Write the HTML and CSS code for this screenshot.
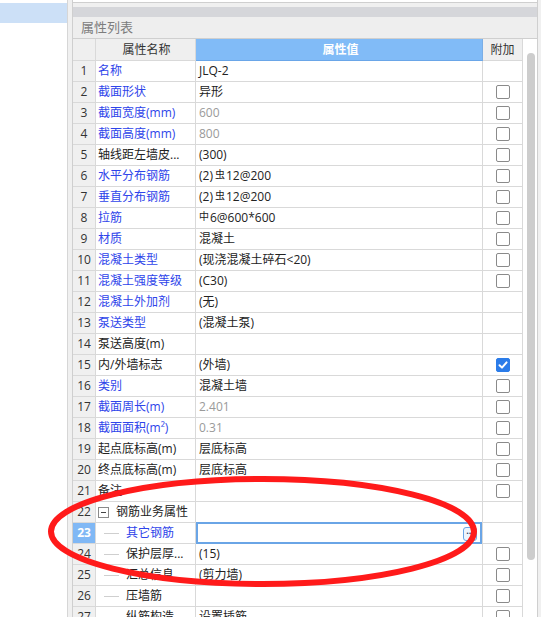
FILE: index.html
```html
<!DOCTYPE html>
<html lang="zh-CN">
<head>
<meta charset="utf-8">
<title>属性列表</title>
<link rel="stylesheet" href="styles.css">
</head>
<body>
<div class="app">
  <div class="left"><div class="sel"></div></div>
  <div class="main">
    <div class="panel">
      <div class="topbox"></div>
      <div class="gap"></div>
      <div class="bar"></div>
      <div class="title">属性列表</div>
      <div class="gridwrap">
        <div class="table">
          <div class="row head">
            <div class="num"></div>
            <div class="name">属性名称</div>
            <div class="val">属性值</div>
            <div class="add">附加</div>
          </div>
          <div class="row"><div class="num">1</div><div class="name blue">名称</div><div class="val">JLQ-2</div><div class="add"></div></div>
          <div class="row"><div class="num">2</div><div class="name blue">截面形状</div><div class="val">异形</div><div class="add"><span class="cb"></span></div></div>
          <div class="row"><div class="num">3</div><div class="name blue">截面宽度(mm)</div><div class="val gray">600</div><div class="add"><span class="cb"></span></div></div>
          <div class="row"><div class="num">4</div><div class="name blue">截面高度(mm)</div><div class="val gray">800</div><div class="add"><span class="cb"></span></div></div>
          <div class="row"><div class="num">5</div><div class="name">轴线距左墙皮...</div><div class="val">(300)</div><div class="add"><span class="cb"></span></div></div>
          <div class="row"><div class="num">6</div><div class="name blue">水平分布钢筋</div><div class="val">(2)<span class="sym">虫</span>12@200</div><div class="add"><span class="cb"></span></div></div>
          <div class="row"><div class="num">7</div><div class="name blue">垂直分布钢筋</div><div class="val">(2)<span class="sym">虫</span>12@200</div><div class="add"><span class="cb"></span></div></div>
          <div class="row"><div class="num">8</div><div class="name blue">拉筋</div><div class="val"><span class="sym first">中</span>6@600*600</div><div class="add"><span class="cb"></span></div></div>
          <div class="row"><div class="num">9</div><div class="name blue">材质</div><div class="val">混凝土</div><div class="add"><span class="cb"></span></div></div>
          <div class="row"><div class="num">10</div><div class="name blue">混凝土类型</div><div class="val">(现浇混凝土碎石&lt;20)</div><div class="add"><span class="cb"></span></div></div>
          <div class="row"><div class="num">11</div><div class="name blue">混凝土强度等级</div><div class="val">(C30)</div><div class="add"><span class="cb"></span></div></div>
          <div class="row"><div class="num">12</div><div class="name blue">混凝土外加剂</div><div class="val">(无)</div><div class="add"></div></div>
          <div class="row"><div class="num">13</div><div class="name blue">泵送类型</div><div class="val">(混凝土泵)</div><div class="add"></div></div>
          <div class="row"><div class="num">14</div><div class="name">泵送高度(m)</div><div class="val"></div><div class="add"></div></div>
          <div class="row"><div class="num">15</div><div class="name">内/外墙标志</div><div class="val">(外墙)</div><div class="add"><span class="cb on"><svg viewBox="0 0 14 14" width="14" height="14"><path d="M3.5 7.2 L6 9.6 L10.6 4.4" fill="none" stroke="#fff" stroke-width="2" stroke-linecap="round" stroke-linejoin="round"/></svg></span></div></div>
          <div class="row"><div class="num">16</div><div class="name blue">类别</div><div class="val">混凝土墙</div><div class="add"><span class="cb"></span></div></div>
          <div class="row"><div class="num">17</div><div class="name blue">截面周长(m)</div><div class="val gray">2.401</div><div class="add"><span class="cb"></span></div></div>
          <div class="row"><div class="num">18</div><div class="name blue">截面面积(m²)</div><div class="val gray">0.31</div><div class="add"><span class="cb"></span></div></div>
          <div class="row"><div class="num">19</div><div class="name">起点底标高(m)</div><div class="val">层底标高</div><div class="add"><span class="cb"></span></div></div>
          <div class="row"><div class="num">20</div><div class="name">终点底标高(m)</div><div class="val">层底标高</div><div class="add"><span class="cb"></span></div></div>
          <div class="row"><div class="num">21</div><div class="name">备注</div><div class="val"></div><div class="add"><span class="cb"></span></div></div>
          <div class="row"><div class="num">22</div><div class="name group"><span class="minus"></span>钢筋业务属性</div><div class="val"></div><div class="add"></div></div>
          <div class="row"><div class="num cur">23</div><div class="name child blue"><span class="tree"></span>其它钢筋</div><div class="val editing"><span class="dots">···</span></div><div class="add"></div></div>
          <div class="row"><div class="num">24</div><div class="name child"><span class="tree"></span>保护层厚...</div><div class="val">(15)</div><div class="add"><span class="cb"></span></div></div>
          <div class="row"><div class="num">25</div><div class="name child"><span class="tree"></span>汇总信息</div><div class="val">(剪力墙)</div><div class="add"><span class="cb"></span></div></div>
          <div class="row"><div class="num">26</div><div class="name child"><span class="tree"></span>压墙筋</div><div class="val"></div><div class="add"><span class="cb"></span></div></div>
          <div class="row"><div class="num">27</div><div class="name child"><span class="tree"></span>纵筋构造</div><div class="val">设置插筋</div><div class="add"><span class="cb"></span></div></div>
        </div>
        <div class="scroll"><div class="thumb"></div></div>
      </div>
    </div>
  </div>
</div>
<svg class="mark" width="541" height="617" viewBox="0 0 541 617">
  <ellipse cx="262.5" cy="531.5" rx="211.5" ry="52.5" fill="none" stroke="#ff1a1a" stroke-width="6"/>
</svg>
</body>
</html>
```

FILE: styles.css
```css
html, body {
  margin: 0;
  padding: 0;
  width: 541px;
  height: 617px;
  overflow: hidden;
  background: #f0f0f0;
  font-family: "Open Sans", "Noto Sans CJK SC", sans-serif;
  font-size: 12px;
  color: #222;
}

.app {
  display: flex;
  height: 617px;
}

.left {
  width: 67px;
  background: #fff;
  border-right: 1px solid #d6d6d6;
  padding-top: 3px;
  box-sizing: content-box;
}

.sel {
  height: 20px;
  background: #cce0f7;
}

.main {
  flex: 1;
  padding: 0 3px 0 4px;
  background: #f0f0f0;
  overflow: hidden;
}

.panel {
  border-left: 1px solid #cfcfcf;
  border-right: 1px solid #cfcfcf;
  height: 617px;
  background: #fff;
}

.topbox {
  height: 2px;
  background: #fff;
  border-bottom: 1px solid #cfcfcf;
}

.gap {
  height: 4px;
  background: #f0f0f0;
}

.bar {
  height: 10px;
  background: #d5d6da;
}

.title {
  height: 21px;
  line-height: 21px;
  background: #eeeeee;
  color: #7d7d7d;
  font-size: 13px;
  padding-left: 8px;
}

.gridwrap {
  display: flex;
  border-top: 1px solid #cfcfcf;
}

.table {
  width: 450px;
}

.row {
  display: grid;
  grid-template-columns: 23px 100px 287px 40px;
  height: 21px;
}

.row > div {
  box-sizing: border-box;
  border-right: 1px solid #d9d9d9;
  border-bottom: 1px solid #d9d9d9;
  line-height: 20px;
  white-space: nowrap;
  overflow: hidden;
}

.row.head {
  height: 22px;
}

.row.head > div {
  line-height: 21px;
  background: #efefef;
  text-align: center;
  color: #333;
}

.row.head > .val {
  background: #81bbf7;
  color: #fff;
  font-weight: bold;
  border-bottom-color: #6aa6e8;
  border-right-color: #7aaee6;
}

.num {
  background: #f0f0f0;
  text-align: center;
  color: #333;
}

.num.cur {
  background: #80b8f5;
  color: #fff;
  font-weight: bold;
}

.name {
  padding-left: 2px;
}

.blue {
  color: #2e44ea;
}

.val {
  padding-left: 3px;
}

.gray {
  color: #9a9a9a;
}

.sym {
  font-size: 10px;
  position: relative;
  top: -2px;
  margin: 0 1px 0 2px;
}

.sym.first {
  margin-left: 0;
}

.add {
  display: flex;
  align-items: center;
  justify-content: center;
}

.cb {
  width: 14px;
  height: 14px;
  box-sizing: border-box;
  border: 1px solid #8a8a8a;
  border-radius: 2px;
  background: #fff;
  display: block;
  margin-left: 1px;
}

.cb.on {
  background: #2b7ce9;
  border-color: #2b7ce9;
  position: relative;
}

.cb.on svg {
  position: absolute;
  left: -1px;
  top: -1px;
}

.group {
  display: flex;
  align-items: center;
}

.minus {
  width: 11px;
  height: 11px;
  box-sizing: border-box;
  border: 1px solid #8a8a8a;
  margin-right: 7px;
  position: relative;
  flex: none;
}

.minus::after {
  content: "";
  position: absolute;
  left: 2px;
  right: 2px;
  top: 4px;
  height: 1px;
  background: #444;
}

.child {
  display: flex;
  align-items: center;
}

.tree {
  width: 15px;
  height: 1px;
  background: #cfcfcf;
  margin-left: 6px;
  margin-right: 7px;
  flex: none;
}

.val.editing {
  position: relative;
  overflow: visible;
}

.val.editing::after {
  content: "";
  position: absolute;
  left: 0;
  right: 0;
  top: -1px;
  bottom: -1px;
  border: 2px solid #6aa5e6;
  pointer-events: none;
}

.dots {
  position: absolute;
  right: 5px;
  top: 4px;
  width: 14px;
  height: 14px;
  box-sizing: border-box;
  border: 1px solid #6aa5e6;
  border-radius: 3px;
  background: #eef5fd;
  font-size: 9px;
  line-height: 10px;
  text-align: center;
  color: #2a3a66;
  font-weight: bold;
}

.scroll {
  width: 14px;
  background: #fff;
}

.thumb {
  margin-top: 14px;
  margin-left: 4px;
  width: 8px;
  height: 507px;
  border-radius: 4px;
  background: #cdcdcd;
}

.mark {
  position: absolute;
  left: 0;
  top: 0;
  pointer-events: none;
}
```
